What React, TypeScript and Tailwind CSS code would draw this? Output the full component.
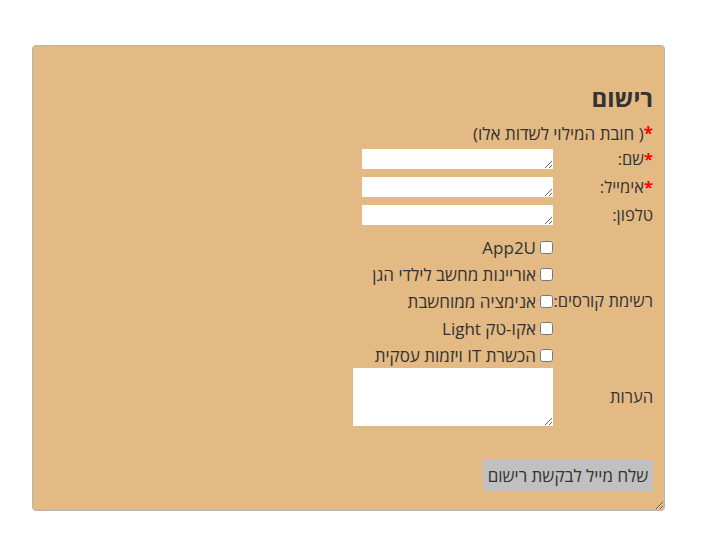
import { ReactNode } from 'react';

const courses = ['App2U', 'אוריינות מחשב לילדי הגן', 'אנימציה ממוחשבת', 'אקו-טק Light', 'הכשרת IT ויזמות עסקית'];

function Row({ label, children, className }: { label?: ReactNode; children?: ReactNode; className?: string }) {
  return (
    <div className={`grid grid-cols-[100px_1fr] items-center ${className ?? ''}`}>
      <div className="whitespace-nowrap text-[16.5px]">{label}</div>
      <div className="flex items-center">{children}</div>
    </div>
  );
}

function Req() {
  return <span className="font-bold text-[#ff0000]">*</span>;
}

export default function App() {
  return (
    <div className="min-h-[537px] bg-white pt-[45px] pl-[32px] font-['Open_Sans',sans-serif] text-[16px] text-[#333]">
      <div className="w-[633px] h-[466px] resize overflow-auto rounded-[4px] border border-[#b4b4b4] bg-[#e3b984]">
        <form dir="rtl" className="pr-[11px]">
          <h2 className="mt-[36px] text-[24px] leading-[32px] font-bold">רישום</h2>
          <p className="mt-[8px] mb-[-1px] h-[24px] text-[17px] leading-[24px]">
            <Req />( חובת המילוי לשדות אלו)
          </p>

          <Row className="h-[28px]" label={<><Req />שם:</>}>
            <textarea dir="ltr" className="h-[20px] w-[191px] resize bg-white" />
          </Row>
          <Row className="h-[28px]" label={<><Req />אימייל:</>}>
            <textarea dir="ltr" className="h-[20px] w-[191px] resize bg-white" />
          </Row>
          <Row className="h-[28px]" label="טלפון:">
            <textarea dir="ltr" className="h-[20px] w-[191px] resize bg-white" />
          </Row>

          <div className="mt-[5px] mb-[-1px]">
            {courses.map((c, i) => (
              <Row key={c} className="h-[27px]" label={i === 2 ? 'רשימת קורסים:' : null}>
                <label className="flex items-center gap-[4px] whitespace-nowrap text-[17px]">
                  <input type="checkbox" className="m-0 h-[13px] w-[13px]" />
                  <span>{c}</span>
                </label>
              </Row>
            ))}
          </div>

          <Row className="h-[58px]" label="הערות">
            <textarea dir="ltr" className="h-[58px] w-[200px] resize bg-white" />
          </Row>

          <button
            type="button"
            className="mt-[34px] h-[32px] w-[170px] bg-[#c0c0c0] text-[17px] text-[#333]"
          >
            שלח מייל לבקשת רישום
          </button>
        </form>
      </div>
    </div>
  );
}
